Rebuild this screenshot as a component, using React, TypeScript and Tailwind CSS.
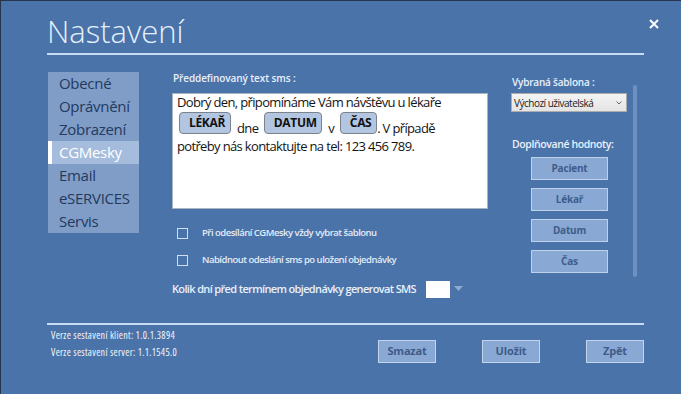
import { useState } from 'react';

const navItems = ['Obecné', 'Oprávnění', 'Zobrazení', 'CGMesky', 'Email', 'eSERVICES', 'Servis'];
const fillValues = ['Pacient', 'Lékař', 'Datum', 'Čas'];

function Chip({ label, w }: { label: string; w: string }) {
  return (
    <span
      className={`inline-flex h-[22px] items-center justify-center rounded-[4px] border border-[#7d838d] bg-[#b3c6e1] pl-[4px] text-[12px] font-bold tracking-[-0.3px] text-[#111] ${w}`}
    >
      {label}
    </span>
  );
}

function Checkbox({ label }: { label: string }) {
  return (
    <div className="flex h-[12px] items-center">
      <span className="ml-[5px] h-[11px] w-[11px] border border-[#d3deee]" />
      <span className="ml-[14px] text-[9.5px] font-semibold tracking-[-0.5px] text-[#e3ebf6]">{label}</span>
    </div>
  );
}

export default function App() {
  const [selected, setSelected] = useState('CGMesky');

  return (
    <div className="relative flex h-[394px] w-[681px] flex-col overflow-hidden border-l border-t border-[#26344c] bg-[#4a73aa] font-['Open_Sans',sans-serif]">
      {/* Hlavička */}
      <div className="ml-[46px] pt-[15px]">
        <h1 className="text-[31px] font-light leading-[31px] text-[#e6f0fb]">Nastavení</h1>
        <div className="mt-[6px] h-[2px] w-[597px] bg-[#c6dcf3]" />
      </div>
      <button className="absolute left-[648px] top-[18px] text-white">
        <svg width="10" height="10" viewBox="0 0 10 10">
          <path d="M1 1L9 9M9 1L1 9" stroke="white" strokeWidth="2" />
        </svg>
      </button>

      <div className="flex h-[268px] items-start">
        {/* Menu */}
        <div className="ml-[47px] mt-[17px] w-[91px] bg-[#7f9dc7]">
          {navItems.map((item) => (
            <div
              key={item}
              onClick={() => setSelected(item)}
              className={`flex h-[23px] items-center text-[15px] tracking-[-0.3px] ${
                selected === item
                  ? 'border-l-[4px] border-white bg-[#a5bcdc] pl-[7px] text-white'
                  : 'pl-[11px] text-[#233a5e]'
              }`}
            >
              {item}
            </div>
          ))}
        </div>

        {/* Text sms */}
        <div className="ml-[33px] mt-[16px] w-[316px]">
          <div className="pl-[1px] text-[10px] font-semibold leading-[14px] tracking-[-0.1px] text-[#e8f0fa]">
            Předdefinovaný text sms :
          </div>
          <div className="mt-[8px] h-[116px] border border-[#a9b4c2] bg-white pl-[4px] text-[13px] leading-[16px] tracking-[-0.65px] text-[#141414]">
            <div>Dobrý den, připomínáme Vám návštěvu u lékaře</div>
            <div className="mt-[2px] flex items-end pl-[2px]">
              <Chip label="LÉKAŘ" w="w-[52px]" />
              <span className="mx-[6px] mb-[-2px]">dne</span>
              <Chip label="DATUM" w="w-[58px]" />
              <span className="mx-[6px] mb-[-2px]">v</span>
              <Chip label="ČAS" w="w-[37px]" />
              <span className="mb-[-2px]">. V případě</span>
            </div>
            <div className="mt-[4px]">potřeby nás kontaktujte na tel: 123 456 789.</div>
          </div>

          <div className="mt-[18px]">
            <Checkbox label="Při odesílání CGMesky vždy vybrat šablonu" />
          </div>
          <div className="mt-[15px]">
            <Checkbox label="Nabídnout odeslání sms po uložení objednávky" />
          </div>
          <div className="mt-[14px] flex h-[18px] items-center">
            <span className="text-[11px] font-semibold tracking-[-0.65px] text-[#e8f0fa]">
              Kolik dní před termínem objednávky generovat SMS
            </span>
            <span className="ml-[10px] h-[17px] w-[24px] bg-white" />
            <svg className="ml-[4px]" width="9" height="6" viewBox="0 0 9 6">
              <path d="M0 0H9L4.5 5Z" fill="#8eaad0" />
            </svg>
          </div>
        </div>

        {/* Šablona */}
        <div className="ml-[23px] mt-[20px] w-[116px]">
          <div className="pl-[1px] text-[10px] font-semibold leading-[14px] tracking-[-0.2px] text-[#e8f0fa]">
            Vybraná šablona :
          </div>
          <div className="mt-[4px] flex h-[19px] items-center justify-between border border-[#acacac] bg-gradient-to-b from-[#f4f4f4] to-[#e4e4e4] pl-[2px] pr-[4px]">
            <span className="whitespace-nowrap text-[10px] leading-[14px] tracking-[-0.5px] text-[#1b1b1b]">
              Výchozí uživatelská
            </span>
            <svg width="6" height="4" viewBox="0 0 6 4">
              <path d="M0.5 0.5L3 3L5.5 0.5" stroke="#666" fill="none" strokeWidth="1" />
            </svg>
          </div>
          <div className="mt-[25px] whitespace-nowrap pl-[1px] text-[10.5px] font-semibold leading-[14px] tracking-[-0.4px] text-[#e8f0fa]">
            Doplňované hodnoty:
          </div>
          <div className="ml-[20px] mt-[6px] flex flex-col gap-[8px]">
            {fillValues.map((v) => (
              <button
                key={v}
                className="flex h-[23px] w-[77px] items-center justify-center border-[1.5px] border-[#bfd2eb] bg-[#89a8d3] text-[10px] font-bold tracking-[-0.2px] text-[#3e5d8b]"
              >
                {v}
              </button>
            ))}
          </div>
        </div>

        {/* Posuvník */}
        <div className="ml-[6px] mt-[30px] h-[192px] w-[4px] rounded-full bg-[#6f91c1]" />
      </div>

      {/* Patička */}
      <div className="ml-[46px] h-[2px] w-[597px] bg-[#c6dcf3]" />
      <div className="flex">
        <div className="ml-[50px] pt-[3px] text-[10px] leading-[14px] tracking-[0.3px] text-[#f2f6fb] [font-stretch:75%]">
          <div>Verze sestavení klient: 1.0.1.3894</div>
          <div className="mt-[3px]">Verze sestavení server: 1.1.1545.0</div>
        </div>
        <div className="ml-auto mr-[37px] mt-[15px] flex gap-[46px]">
          {['Smazat', 'Uložit', 'Zpět'].map((b) => (
            <button
              key={b}
              className="flex h-[23px] w-[58px] items-center justify-center border-[1.5px] border-[#c3d5ed] bg-[#89a8d3] text-[11px] font-bold tracking-[-0.2px] text-[#3e5b88]"
            >
              {b}
            </button>
          ))}
        </div>
      </div>
    </div>
  );
}
